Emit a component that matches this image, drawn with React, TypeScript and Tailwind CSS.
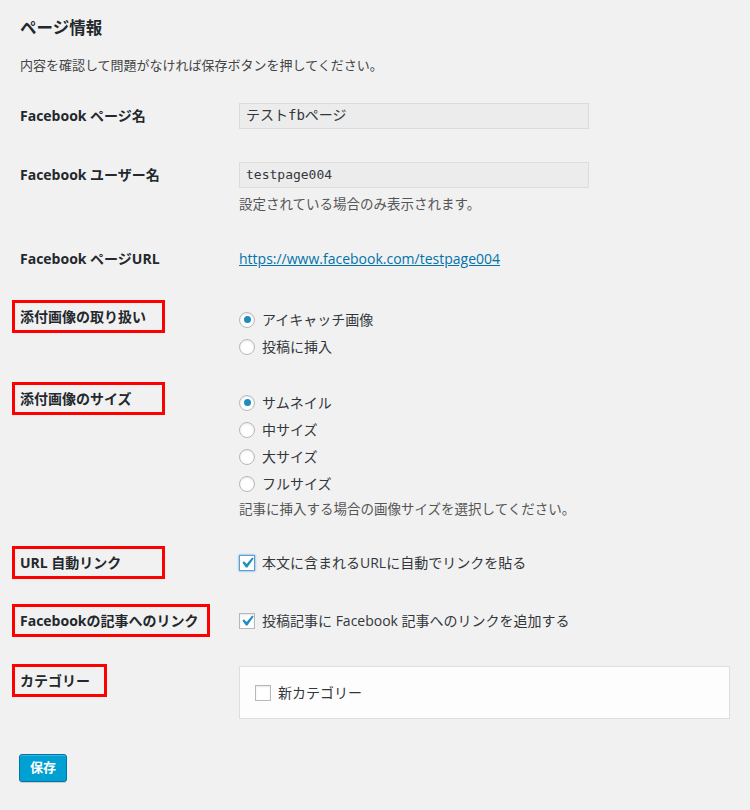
import type { ReactNode } from 'react'

const font = 'font-["Open_Sans","Noto_Sans_CJK_JP",sans-serif]'
const mono = 'font-["DejaVu_Sans_Mono","Noto_Sans_CJK_JP",monospace]'

function LabelBox({ children, w, boxed = true }: { children: ReactNode; w?: string; boxed?: boolean }) {
    return (
        <div
            className={`-ml-[8px] h-[33px] border-[3px] pl-[5px] flex items-center text-[14px] font-bold text-[#23282d] whitespace-nowrap ${boxed ? 'border-[#ff0000]' : 'border-transparent'} ${w ?? ''}`}
        >
            {children}
        </div>
    )
}

function Radio({ checked, label }: { checked?: boolean; label: string }) {
    return (
        <div className="h-[27px] flex items-center">
            <span className="w-[16px] h-[16px] rounded-full border border-[#b4b9be] bg-white shadow-[inset_0_1px_2px_rgba(0,0,0,0.1)] flex items-center justify-center shrink-0">
                {checked && <span className="w-[7px] h-[7px] rounded-full bg-[#1e8cbe]" />}
            </span>
            <span className="ml-[7px] text-[14px] text-[#32373c]">{label}</span>
        </div>
    )
}

function Checkbox({ checked, focus, label }: { checked?: boolean; focus?: boolean; label: string }) {
    return (
        <div className="flex items-center">
            <span
                className={`w-[16px] h-[16px] border bg-white flex items-center justify-center shrink-0 ${focus ? 'border-[#5b9dd9] shadow-[0_0_2px_rgba(30,140,190,0.8)]' : 'border-[#b4b9be] shadow-[inset_0_1px_2px_rgba(0,0,0,0.1)]'}`}
            >
                {checked && (
                    <svg width="16" height="16" viewBox="3.5 3.5 13 13">
                        <path d="M14.83 4.89l1.34.94-5.81 8.38H9.02L5.78 9.67l1.34-1.25 2.57 2.4z" fill="#1e8cbe" />
                    </svg>
                )}
            </span>
            <span className="ml-[7px] text-[14px] text-[#32373c]">{label}</span>
        </div>
    )
}

export default function App() {
    return (
        <div className={`min-h-[810px] w-[750px] bg-[#f1f1f1] pl-[20px] pt-[16px] ${font}`}>
            <h2 className="text-[16.5px] leading-[24px] font-bold text-[#23282d]">ページ情報</h2>
            <p className="mt-[15px] text-[13px] leading-[20px] text-[#444]">
                内容を確認して問題がなければ保存ボタンを押してください。
            </p>

            {/* Facebook ページ名 */}
            <div className="mt-[24px] flex items-center">
                <div className="w-[219px] shrink-0">
                    <LabelBox boxed={false}>Facebook ページ名</LabelBox>
                </div>
                <div className={`w-[350px] h-[26px] border border-[#dcdcdc] bg-[#ececec] px-[6px] flex items-center text-[14px] text-[#32373c] ${mono}`}>
                    テストfbページ
                </div>
            </div>

            {/* Facebook ユーザー名 */}
            <div className="mt-[26px] flex items-start">
                <div className="w-[219px] shrink-0">
                    <LabelBox boxed={false}>Facebook ユーザー名</LabelBox>
                </div>
                <div className="pt-[4px]">
                    <div className={`w-[350px] h-[26px] border border-[#dcdcdc] bg-[#ececec] px-[6px] flex items-center text-[13px] text-[#32373c] ${mono}`}>
                        testpage004
                    </div>
                    <p className="mt-[6px] text-[13.5px] leading-[20px] text-[#555]">設定されている場合のみ表示されます。</p>
                </div>
            </div>

            {/* Facebook ページURL */}
            <div className="mt-[28px] flex items-center">
                <div className="w-[219px] shrink-0">
                    <LabelBox boxed={false}>Facebook ページURL</LabelBox>
                </div>
                <a href="#" className="text-[14px] text-[#0073aa] underline">
                    https://www.facebook.com/testpage004
                </a>
            </div>

            {/* 添付画像の取り扱い */}
            <div className="mt-[25px] flex items-start">
                <div className="w-[219px] shrink-0">
                    <LabelBox w="w-[153px]">添付画像の取り扱い</LabelBox>
                </div>
                <div className="pt-[6px]">
                    <Radio checked label="アイキャッチ画像" />
                    <Radio label="投稿に挿入" />
                </div>
            </div>

            {/* 添付画像のサイズ */}
            <div className="mt-[22px] flex items-start">
                <div className="w-[219px] shrink-0">
                    <LabelBox w="w-[153px]">添付画像のサイズ</LabelBox>
                </div>
                <div className="pt-[7px]">
                    <Radio checked label="サムネイル" />
                    <Radio label="中サイズ" />
                    <Radio label="大サイズ" />
                    <Radio label="フルサイズ" />
                    <p className="mt-[2px] text-[13.5px] leading-[20px] text-[#555]">
                        記事に挿入する場合の画像サイズを選択してください。
                    </p>
                </div>
            </div>

            {/* URL 自動リンク */}
            <div className="mt-[27px] flex items-center">
                <div className="w-[219px] shrink-0">
                    <LabelBox w="w-[153px]">URL 自動リンク</LabelBox>
                </div>
                <Checkbox checked focus label="本文に含まれるURLに自動でリンクを貼る" />
            </div>

            {/* Facebookの記事へのリンク */}
            <div className="mt-[25px] flex items-center">
                <div className="w-[219px] shrink-0">
                    <LabelBox w="w-[198px]">Facebookの記事へのリンク</LabelBox>
                </div>
                <Checkbox checked label="投稿記事に Facebook 記事へのリンクを追加する" />
            </div>

            {/* カテゴリー */}
            <div className="mt-[27px] flex items-start">
                <div className="w-[219px] shrink-0">
                    <LabelBox w="w-[95px]">カテゴリー</LabelBox>
                </div>
                <div className="pt-[2px]">
                    <div className="w-[491px] h-[53px] border border-[#dedede] bg-[#fdfdfd] pl-[15px] flex items-center">
                        <Checkbox label="新カテゴリー" />
                    </div>
                </div>
            </div>

            <button className="mt-[35px] -ml-[1px] w-[48px] h-[28px] rounded-[3px] border border-[#0073aa] bg-[#00a0d2] shadow-[inset_0_1px_0_rgba(120,200,230,0.5),0_1px_0_rgba(0,0,0,0.15)] text-white text-[13px] font-bold">
                保存
            </button>
        </div>
    )
}
